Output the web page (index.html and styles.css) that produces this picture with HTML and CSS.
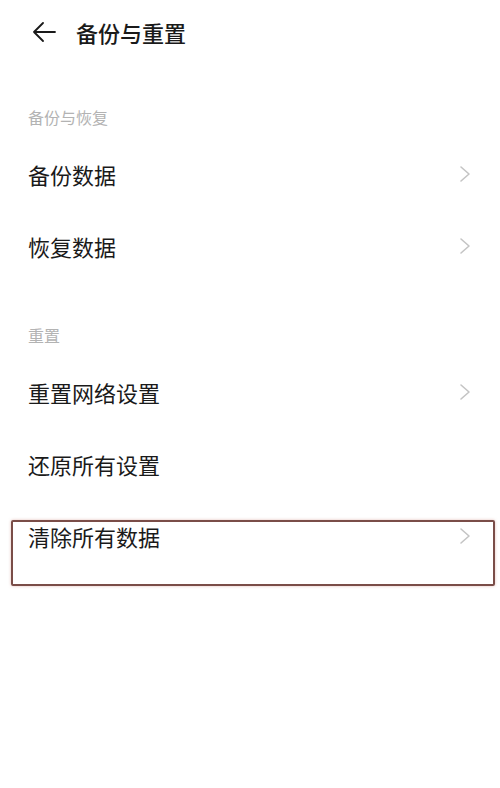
FILE: index.html
```html
<!DOCTYPE html>
<html lang="zh-CN">
<head>
    <meta charset="UTF-8">
    <meta name="viewport" content="width=device-width, initial-scale=1.0">
    <title>备份与重置</title>
    <link rel="stylesheet" href="styles.css">
</head>
<body>

    <div class="page">
        <!-- Top bar -->
        <div class="topbar">
            <svg class="back" width="24" height="20" viewBox="0 0 24 20">
                <path d="M11 1 L2 10 L11 19 M2 10 H23" fill="none" stroke="#1a1a1a" stroke-width="1.8" stroke-linecap="round" stroke-linejoin="round"/>
            </svg>
            <h1>备份与重置</h1>
        </div>

        <!-- Backup section -->
        <div class="section-title first">备份与恢复</div>
        <ul class="list">
            <li class="row">
                <span>备份数据</span>
                <svg class="chevron" width="12" height="18" viewBox="0 0 12 18"><path d="M2 2 L10 9 L2 16" fill="none" stroke="#c4c4c4" stroke-width="1.6" stroke-linecap="round" stroke-linejoin="round"/></svg>
            </li>
            <li class="row">
                <span>恢复数据</span>
                <svg class="chevron" width="12" height="18" viewBox="0 0 12 18"><path d="M2 2 L10 9 L2 16" fill="none" stroke="#c4c4c4" stroke-width="1.6" stroke-linecap="round" stroke-linejoin="round"/></svg>
            </li>
        </ul>

        <!-- Reset section -->
        <div class="section-title">重置</div>
        <ul class="list">
            <li class="row">
                <span>重置网络设置</span>
                <svg class="chevron" width="12" height="18" viewBox="0 0 12 18"><path d="M2 2 L10 9 L2 16" fill="none" stroke="#c4c4c4" stroke-width="1.6" stroke-linecap="round" stroke-linejoin="round"/></svg>
            </li>
            <li class="row">
                <span>还原所有设置</span>
            </li>
            <li class="row marked">
                <span>清除所有数据</span>
                <svg class="chevron" width="12" height="18" viewBox="0 0 12 18"><path d="M2 2 L10 9 L2 16" fill="none" stroke="#c4c4c4" stroke-width="1.6" stroke-linecap="round" stroke-linejoin="round"/></svg>
                <!-- annotation box drawn over the row -->
                <div class="highlight"></div>
            </li>
        </ul>
    </div>

</body>
</html>
```

FILE: styles.css
```css
html, body {
    margin: 0;
    background-color: #ffffff;
    font-family: "Noto Sans CJK SC", "Noto Sans", sans-serif;
    color: #1a1a1a;
}

.page {
    width: 500px;
    height: 788px;
}

/* Top bar */
.topbar {
    height: 64px;
    display: flex;
    align-items: center;
    padding-left: 32px;
}

.back {
    margin-right: 20px;
}

h1 {
    margin: 0;
    font-size: 22px;
    font-weight: 500;
}

/* Section headings */
.section-title {
    height: 32px;
    line-height: 32px;
    padding-left: 28px;
    margin-top: 37px;
    font-size: 16px;
    color: #b3b3b3;
}

/* Rows */
.list {
    list-style: none;
    margin: 0;
    padding: 0;
}

.row {
    position: relative;
    height: 72px;
    display: flex;
    align-items: center;
    justify-content: space-between;
    padding: 0 29px 0 28px;
    font-size: 22px;
}

.row:first-child {
    margin-top: 5px;
}

.chevron {
    display: block;
}

/* Red annotation box */
.highlight {
    position: absolute;
    left: 11px;
    right: 5px;
    top: 20px;
    height: 62px;
    border: 2px solid #7a4d48;
    border-radius: 2px;
    box-shadow: 0 0 3px rgba(200, 120, 110, 0.5);
    pointer-events: none;
}
```
